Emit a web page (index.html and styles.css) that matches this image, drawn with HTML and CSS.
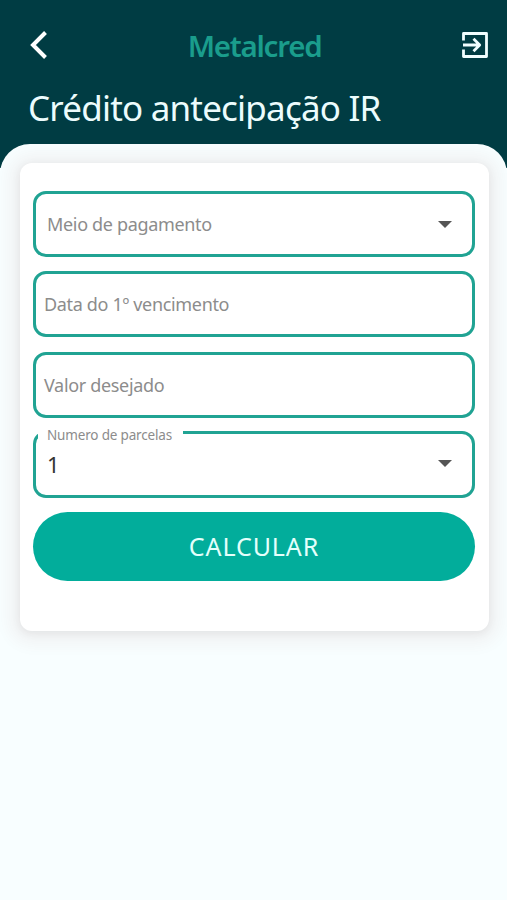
FILE: index.html
```html
<!DOCTYPE html>
<html lang="pt-BR">
<head>
    <meta charset="UTF-8">
    <meta name="viewport" content="width=device-width, initial-scale=1.0">
    <title>Metalcred</title>
    <link rel="stylesheet" href="styles.css">
</head>
<body>

    <!-- Header -->
    <header class="header">
        <div class="top-bar">
            <svg class="icon-back" viewBox="0 0 18 30"><path d="M15.5 2.5L3 15l12.5 12.5"/></svg>
            <span class="brand">Metalcred</span>
            <svg class="icon-exit" viewBox="0 0 26 26">
                <path d="M1.5 8.5V1.5H24.5V24.5H1.5V17.5"/>
                <path d="M1 13H17M11.5 6.8L17.7 13L11.5 19.2"/>
            </svg>
        </div>
        <h1>Crédito antecipação IR</h1>
    </header>

    <!-- Simulation form -->
    <main class="content">
        <div class="card">
            <div class="field">
                <span class="label label-select">Meio de pagamento</span>
                <span class="arrow"></span>
            </div>
            <div class="field">
                <span class="label label-date">Data do 1º vencimento</span>
            </div>
            <div class="field">
                <span class="label label-value">Valor desejado</span>
            </div>
            <fieldset class="field-outlined">
                <legend>Numero de parcelas</legend>
                <div class="select-row">
                    <span class="value">1</span>
                    <span class="arrow"></span>
                </div>
            </fieldset>
            <button class="btn-calc">CALCULAR</button>
        </div>
    </main>

</body>
</html>
```

FILE: styles.css
```css
* {
    box-sizing: border-box;
}

body {
    margin: 0;
    height: 900px;
    overflow: hidden;
    font-family: "Noto Sans", "Open Sans", sans-serif;
    background: linear-gradient(#003c43 168px, #f8feff 168px);
}

/* Header */
.header {
    height: 144px;
    color: #ecfcfd;
}

.top-bar {
    display: flex;
    justify-content: space-between;
    align-items: center;
    height: 60px;
    padding: 30px 19px 0 30px;
}

.icon-back {
    width: 18px;
    height: 30px;
    fill: none;
    stroke: #fff;
    stroke-width: 4;
}

.brand {
    margin-left: -1px;
    padding-top: 2px;
    color: #1a9d8c;
    font-size: 29.5px;
    font-weight: 600;
    line-height: 30px;
    letter-spacing: -1.25px;
}

.icon-exit {
    width: 26px;
    height: 26px;
    fill: none;
    stroke: #f0feff;
    stroke-width: 2.8;
    stroke-linejoin: round;
}

h1 {
    margin: 24px 0 0 28px;
    font-size: 35px;
    font-weight: 400;
    line-height: 48px;
    letter-spacing: -0.8px;
    white-space: nowrap;
}

/* Content */
.content {
    height: 756px;
    padding: 19px 18px 0 20px;
    border-radius: 30px 30px 0 0;
    background-color: #f8feff;
    overflow: hidden;
}

.card {
    height: 468px;
    padding: 28px 14px 0 13px;
    border-radius: 12px;
    background-color: #fff;
    box-shadow: 0 2px 10px rgba(40, 20, 20, 0.08), 0 2px 16px 12px rgba(110, 10, 30, 0.045);
}

.field {
    display: flex;
    align-items: center;
    justify-content: space-between;
    height: 66px;
    margin-bottom: 14.3px;
    border: 3px solid #20a393;
    border-radius: 13px;
}

.label {
    color: #8c8c8c;
    font-size: 18px;
    letter-spacing: -0.33px;
}

.label-select {
    margin-left: 11px;
}

.label-date,
.label-value {
    margin-left: 8px;
}

.arrow {
    margin-right: 20px;
    border: 7px solid transparent;
    border-top-color: #555;
    border-bottom: 0;
}

/* Field with the label on the border */
.field-outlined {
    height: 74px;
    margin: -8px 0 14px;
    padding: 0 0 0 2px;
    border: 3px solid #20a393;
    border-radius: 13px;
}

.field-outlined legend {
    height: 18px;
    padding: 0 11px 0 9px;
    color: #8c8c8c;
    font-size: 13.5px;
    line-height: 23px;
    letter-spacing: -0.17px;
}

.select-row {
    display: flex;
    align-items: center;
    justify-content: space-between;
    height: 44px;
}

.value {
    margin-left: 9px;
    color: #333;
    font-size: 22px;
}

.btn-calc {
    display: block;
    width: 100%;
    height: 69px;
    padding: 0;
    border: none;
    border-radius: 35px;
    background-color: #02ad9b;
    color: #e4fffb;
    font-family: inherit;
    font-size: 25px;
    letter-spacing: 0.9px;
}
```
